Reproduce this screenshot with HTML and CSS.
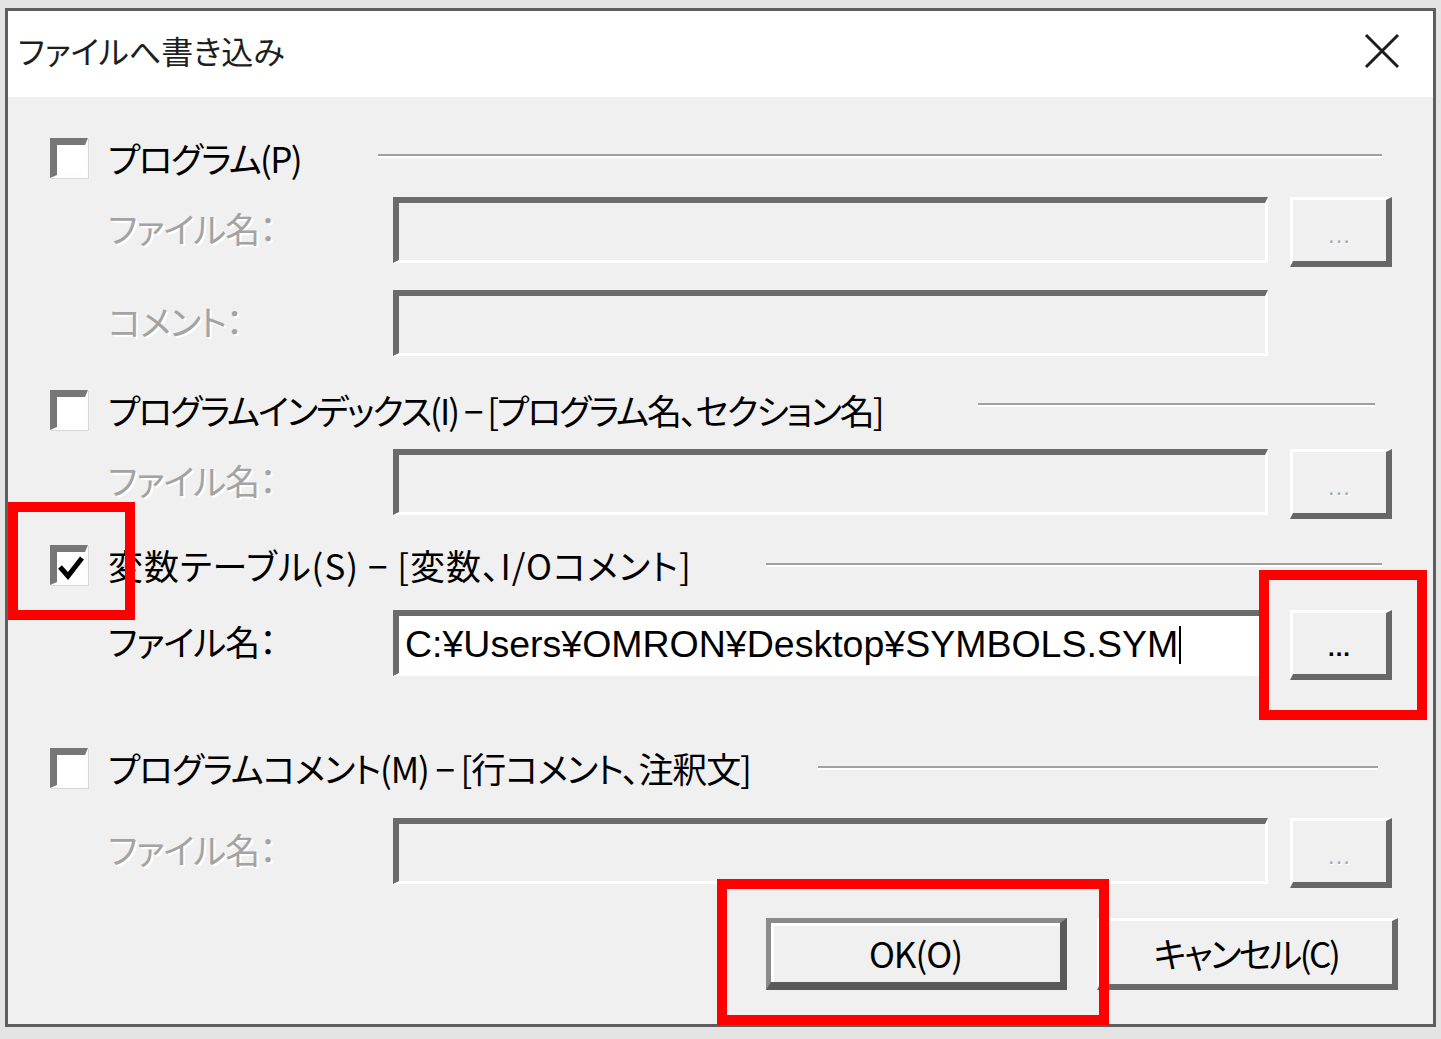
FILE: index.html
```html
<!DOCTYPE html>
<html lang="ja">
<head>
<meta charset="utf-8">
<title>ファイルへ書き込み</title>
<link rel="stylesheet" href="styles.css">
</head>
<body>
<div class="window">
  <div class="titlebar">
    <div class="title">ファイルへ書き込み</div>
    <svg class="close" width="36" height="36" viewBox="0 0 36 36"><path d="M2 2 L34 34 M34 2 L2 34" stroke="#1c1c1c" stroke-width="3" fill="none"/></svg>
  </div>
  <div class="content">
    <div class="check-row r1">
      <span class="cb"></span>
      <span class="label l1">プログラム(P)</span>
      <span class="sep sep1"></span>
    </div>
    <div class="field-row f1">
      <span class="flabel disabled">ファイル名：</span>
      <span class="input disabled-input"></span>
      <span class="browse disabled-btn">...</span>
    </div>
    <div class="field-row f2">
      <span class="flabel disabled">コメント：</span>
      <span class="input disabled-input"></span>
    </div>

    <div class="check-row r2">
      <span class="cb"></span>
      <span class="label l2">プログラムインデックス(I) − [プログラム名、セクション名]</span>
      <span class="sep sep2"></span>
    </div>
    <div class="field-row f3">
      <span class="flabel disabled">ファイル名：</span>
      <span class="input disabled-input"></span>
      <span class="browse disabled-btn">...</span>
    </div>

    <div class="check-row r3">
      <span class="cb checked"><svg width="28" height="28" viewBox="0 0 28 28"><path d="M3 13 L11 22 L25 4" stroke="#000" stroke-width="5" fill="none" stroke-linejoin="miter"/></svg></span>
      <span class="label l3">変数テーブル(S) − [変数、I/Oコメント]</span>
      <span class="sep sep3"></span>
    </div>
    <div class="field-row f4">
      <span class="flabel">ファイル名：</span>
      <span class="input active"><span class="value">C:¥Users¥OMRON¥Desktop¥SYMBOLS.SYM</span><span class="caret"></span></span>
      <span class="browse">...</span>
    </div>

    <div class="check-row r4">
      <span class="cb"></span>
      <span class="label l4">プログラムコメント(M) − [行コメント、注釈文]</span>
      <span class="sep sep4"></span>
    </div>
    <div class="field-row f5">
      <span class="flabel disabled">ファイル名：</span>
      <span class="input disabled-input"></span>
      <span class="browse disabled-btn">...</span>
    </div>

    <div class="actions">
      <button class="btn default">OK(O)</button>
      <button class="btn cancel">キャンセル(C)</button>
    </div>
  </div>
</div>
<div class="mark mark-check"></div>
<div class="mark mark-browse"></div>
<div class="mark mark-ok"></div>
</body>
</html>
```
FILE: styles.css
```css
html, body {
  margin: 0;
  padding: 0;
}
body {
  background: #e4e4e4;
  width: 1441px;
  height: 1039px;
  position: relative;
  overflow: hidden;
  font-family: "Noto Sans CJK JP", "Noto Sans", sans-serif;
  font-feature-settings: "palt";
  color: #000;
}
.window {
  position: absolute;
  left: 5px;
  top: 8px;
  width: 1431px;
  height: 1019px;
  box-sizing: border-box;
  border: 3px solid #5e5e5e;
  background: #f0f0f0;
  display: flex;
  flex-direction: column;
}
.titlebar {
  height: 86px;
  background: #fff;
  display: flex;
  justify-content: space-between;
  align-items: flex-start;
  flex: none;
}
.title {
  margin: 19px 0 0 10px;
  font-size: 32px;
  line-height: 40px;
  color: #1e1e1e;
  letter-spacing: 0;
}
.close {
  margin: 22px 33px 0 0;
}
.content {
  flex: 1;
  display: flex;
  flex-direction: column;
  padding-left: 42px;
}
.check-row {
  height: 40px;
  display: flex;
  align-items: center;
}
.r1 { margin-top: 41px; }
.r2 { margin-top: 34px; }
.r3 { margin-top: 30px; }
.r4 { margin-top: 72px; }

.cb {
  width: 38px;
  height: 40px;
  box-sizing: border-box;
  flex: none;
  background: #fff;
  border-top: 7px solid #777;
  border-left: 7px solid #777;
  border-right: 3px solid #fdfdfd;
  border-bottom: 3px solid #fdfdfd;
  box-shadow: 1px 1px 0 #d8d8d8;
  display: flex;
  align-items: center;
  justify-content: center;
}
.cb svg { display: block; margin-top: 2px; }
.label {
  margin-left: 20px;
  font-size: 35px;
  line-height: 40px;
  white-space: pre;
  letter-spacing: -1px;
}
.l1 { letter-spacing: -1.6px; }
.l2 { letter-spacing: -2px; }
.l3 { letter-spacing: 1px; }
.l4 { letter-spacing: -1.1px; }
.sep {
  margin-left: auto;
  height: 2px;
  background: #a0a0a0;
  border-bottom: 2px solid #fff;
  flex: none;
}
.sep1 { width: 1004px; margin-right: 51px; margin-bottom: 5px; }
.sep2 { width: 397px; margin-right: 58px; margin-bottom: 10px; }
.sep3 { width: 616px; margin-right: 51px; }
.sep4 { width: 560px; margin-right: 55px; }

.field-row {
  height: 66px;
  display: flex;
  align-items: flex-start;
  padding-left: 58px;
}
.f1 { margin-top: 19px; }
.f2 { margin-top: 27px; }
.f3 { margin-top: 19px; }
.f4 { margin-top: 25px; }
.f5 { margin-top: 30px; }

.flabel {
  width: 285px;
  flex: none;
  font-size: 35px;
  line-height: 62px;
  white-space: nowrap;
  letter-spacing: -1px;
}
.disabled {
  color: #a3a3a3;
  text-shadow: 2px 2px 0 #fff;
}
.input {
  width: 875px;
  height: 66px;
  box-sizing: border-box;
  flex: none;
  border-top: 6px solid #6b6b6b;
  border-left: 6px solid #6b6b6b;
  border-right: 3px solid #fff;
  border-bottom: 3px solid #fff;
  display: flex;
  align-items: center;
  padding-left: 6px;
}
.disabled-input {
  background: #f0f0f0;
}
.active {
  background: #fff;
}
.value {
  font-family: "Liberation Sans", Arial, sans-serif;
  font-size: 37.5px;
  letter-spacing: 0;
  white-space: nowrap;
}
.caret {
  width: 2px;
  height: 38px;
  background: #000;
  margin-left: 1px;
}
.browse {
  margin-left: 22px;
  width: 102px;
  height: 70px;
  box-sizing: border-box;
  flex: none;
  background: #f0f0f0;
  border-top: 3px solid #fff;
  border-left: 3px solid #fff;
  border-right: 6px solid #676767;
  border-bottom: 6px solid #676767;
  font-family: "Liberation Sans", Arial, sans-serif;
  font-size: 24px;
  font-weight: bold;
  line-height: 1;
  display: flex;
  align-items: flex-end;
  justify-content: center;
  padding-bottom: 14px;
  letter-spacing: 1px;
}
.disabled-btn {
  color: #a8a8a8;
  text-shadow: 1px 1px 0 #fff;
  font-weight: normal;
}

.actions {
  margin-top: 34px;
  display: flex;
  justify-content: flex-end;
  gap: 30px;
  padding-right: 35px;
}
.btn {
  width: 301px;
  height: 72px;
  box-sizing: border-box;
  background: #f0f0f0;
  font-family: "Noto Sans CJK JP", sans-serif;
  font-feature-settings: "palt";
  font-size: 35px;
  color: #000;
  border-top: 3px solid #fff;
  border-left: 3px solid #fff;
  border-right: 6px solid #6a6a6a;
  border-bottom: 6px solid #6a6a6a;
  padding: 0;
  letter-spacing: -1px;
}
.btn.cancel {
  letter-spacing: -2.5px;
}
.btn.default {
  border-top: 5px solid #8a8a8a;
  border-left: 5px solid #8a8a8a;
  border-right: 7px solid #5a5a5a;
  border-bottom: 8px solid #5a5a5a;
  box-shadow: inset 3px 3px 0 #fff;
}

.mark {
  position: absolute;
  border: 10px solid #ff0000;
  box-sizing: border-box;
}
.mark-check { left: 8px; top: 502px; width: 127px; height: 118px; }
.mark-browse { left: 1259px; top: 570px; width: 168px; height: 150px; }
.mark-ok { left: 717px; top: 879px; width: 392px; height: 146px; }
```
